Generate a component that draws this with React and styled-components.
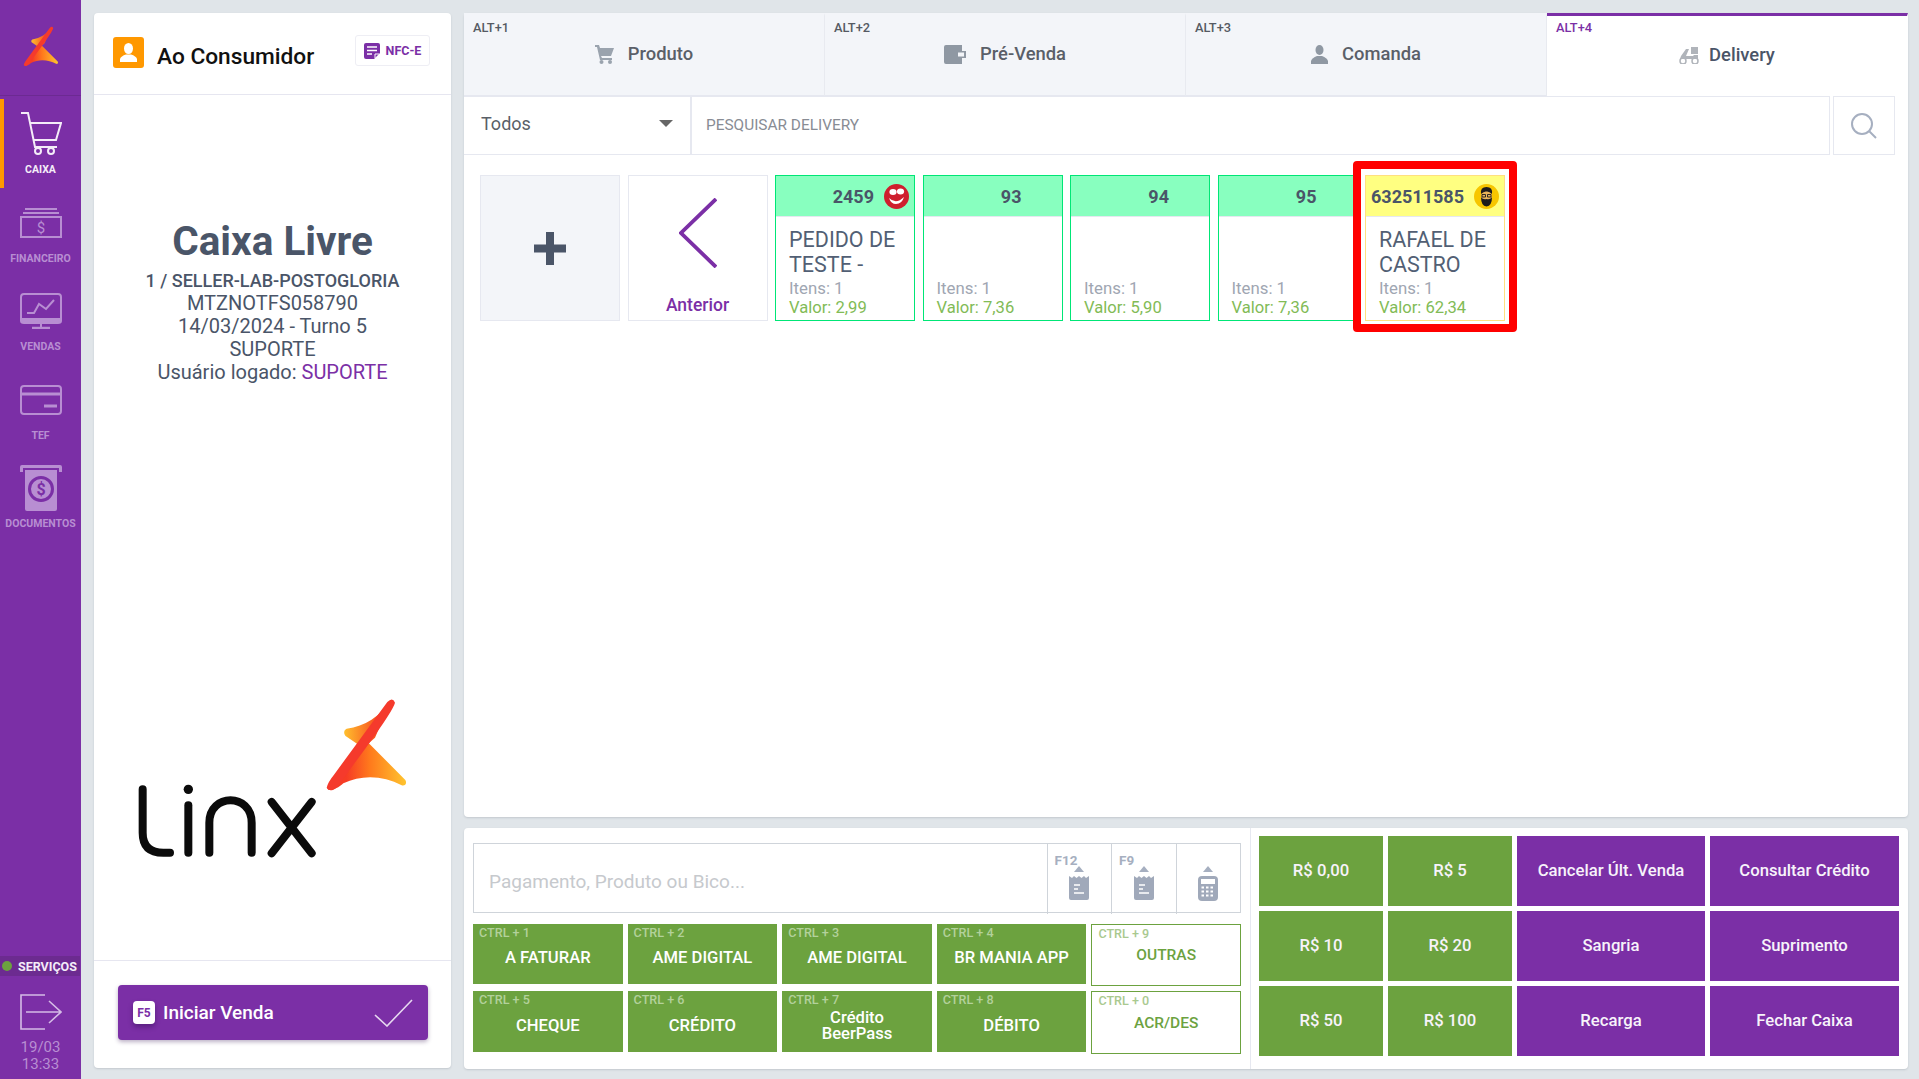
import React from "react";
import styled, { createGlobalStyle } from "styled-components";

const PURPLE = "#7b2fa6";
const GREEN = "#6ca23f";
const SLATE = "#4a5568";

const Global = createGlobalStyle`
  html, body { margin: 0; padding: 0; height: 100%; background: #e0e5e9; overflow: hidden; }
  body { font-family: Roboto, "Liberation Sans", sans-serif; }
  * { box-sizing: border-box; }
`;

const Page = styled.div`
  display: flex;
  width: 1919px;
  height: 1079px;
  background: #e0e5e9;
`;

/* ---------- sidebar ---------- */
const Sidebar = styled.nav`
  width: 81px;
  flex: none;
  display: flex;
  flex-direction: column;
  background: ${PURPLE};
`;
const BrandBox = styled.div`
  height: 96px;
  padding-bottom: 3px;
  flex: none;
  display: flex;
  align-items: center;
  justify-content: center;
  border-bottom: 1px solid #6c2a92;
  margin-bottom: 3px;
`;
const NavItem = styled.div`
  height: 88.6px;
  padding-top: 5px;
  display: flex;
  flex-direction: column;
  align-items: center;
  border-left: ${(p) => (p.$active ? "4px solid #ff9800" : "none")};
  padding-right: ${(p) => (p.$active ? "4px" : "0")};
  color: ${(p) => (p.$active ? "#f4ecf8" : "#b88ed2")};
`;
const NavIcon = styled.div`
  height: 60px;
  display: flex;
  align-items: center;
  justify-content: center;
`;
const NavLabel = styled.span`
  font-size: 10.5px;
  line-height: 12px;
  font-weight: 700;
  white-space: nowrap;
`;
const SideBottom = styled.div`
  margin-top: auto;
  display: flex;
  flex-direction: column;
  align-items: center;
`;
const ServiceBar = styled.div`
  width: 80px;
  margin-right: 1px;
  height: 20px;
  background: #6c2b90;
  display: flex;
  align-items: center;
  padding-left: 2px;
  gap: 6px;
  color: #f4ecf8;
  font-size: 12.5px;
  font-weight: 700;
`;
const Dot = styled.i`
  width: 10px;
  height: 10px;
  border-radius: 50%;
  background: #6ca23f;
  flex: none;
`;
const ExitBox = styled.div`
  margin-top: 18px;
  height: 36px;
  color: #d5bce6;
`;
const Clock = styled.div`
  margin-top: 9px;
  padding-bottom: 6px;
  text-align: center;
  font-size: 15px;
  line-height: 17px;
  color: #b88ed2;
`;

/* ---------- workspace ---------- */
const Workspace = styled.div`
  flex: 1;
  min-width: 0;
  display: flex;
  gap: 13px;
  padding: 13px 11px 10px 13px;
`;
const Panel = styled.section`
  background: #fff;
  border-radius: 4px;
  box-shadow: 0 1px 2px rgba(60, 70, 90, 0.18);
`;
const LeftPanel = styled(Panel)`
  width: 357px;
  flex: none;
  margin-bottom: 1px;
  display: flex;
  flex-direction: column;
`;
const CustomerHeader = styled.header`
  height: 82px;
  flex: none;
  position: relative;
  display: flex;
  align-items: center;
  padding: 0 0 2px 19px;
  gap: 13px;
  border-bottom: 1px solid #e6e6f0;
`;
const Avatar = styled.div`
  width: 31px;
  height: 31px;
  border-radius: 3px;
  background: #ff9800;
  display: flex;
  align-items: center;
  justify-content: center;
`;
const CustomerName = styled.h2`
  margin: 8px 0 0;
  font-size: 22.7px;
  font-weight: 500;
  color: #111;
`;
const NfceTag = styled.div`
  position: absolute;
  left: 261px;
  top: 22px;
  width: 75px;
  height: 31px;
  border: 1px solid #eeeef4;
  border-radius: 3px;
  display: flex;
  align-items: center;
  justify-content: center;
  gap: 6px;
  font-size: 12.5px;
  font-weight: 700;
  color: ${PURPLE};
`;
const CashInfo = styled.div`
  padding-top: 123px;
  text-align: center;
  color: ${SLATE};
  font-size: 20px;
  line-height: 23px;
`;
const CashTitle = styled.h1`
  margin: 0 0 5px;
  font-size: 40.5px;
  line-height: 46px;
  font-weight: 700;
`;
const CashStrong = styled.div`
  font-size: 18px;
  font-weight: 500;
`;
const UserName = styled.span`
  color: ${PURPLE};
`;
const LogoBox = styled.div`
  margin-top: auto;
  padding: 0 0 99px 41px;
  display: flex;
`;
const StartFooter = styled.footer`
  height: 108px;
  flex: none;
  padding: 24px 23px 0 24px;
  border-top: 1px solid #e6e6f0;
`;
const StartButton = styled.button`
  width: 310px;
  height: 55px;
  border: 0;
  border-radius: 4px;
  background: ${PURPLE};
  box-shadow: 0 2px 4px rgba(60, 30, 90, 0.35);
  display: flex;
  align-items: center;
  padding: 0 15px;
  gap: 8px;
  color: #fff;
  font: 500 19px Roboto, sans-serif;
`;
const KeyBadge = styled.span`
  width: 22px;
  height: 23px;
  border-radius: 4px;
  background: #fff;
  color: ${PURPLE};
  font-size: 12px;
  font-weight: 700;
  display: flex;
  align-items: center;
  justify-content: center;
  box-shadow: 0 3px 5px rgba(40, 10, 70, 0.4);
`;
const CheckBox = styled.span`
  margin-left: auto;
  display: flex;
`;

const RightColumn = styled.div`
  flex: 1;
  min-width: 0;
  display: flex;
  flex-direction: column;
  gap: 11px;
`;
const MainPanel = styled(Panel)`
  flex: 1;
  min-height: 0;
  display: flex;
  flex-direction: column;
  position: relative;
`;
const Tabs = styled.div`
  height: 84px;
  flex: none;
  display: grid;
  grid-template-columns: repeat(4, 1fr);
`;
const Tab = styled.div`
  background: ${(p) => (p.$active ? "#fff" : "#f3f5f9")};
  border-top: 3px solid ${(p) => (p.$active ? PURPLE : "#f3f5f9")};
  border-right: 1px solid ${(p) => (p.$active ? "transparent" : "#e8eaf0")};
  border-bottom: 2px solid ${(p) => (p.$active ? "#fff" : "#e6e8f0")};
  display: flex;
  flex-direction: column;
  padding: 5px 0 0 9px;
  color: ${(p) => (p.$active ? SLATE : "#5a5f68")};
`;
const TabKey = styled.span`
  font-size: 12.8px;
  line-height: 14px;
  font-weight: 500;
  color: ${(p) => (p.$active ? PURPLE : "#555a63")};
`;
const TabTitle = styled.div`
  margin-top: ${(p) => (p.$active ? "7px" : "6px")};
  margin-left: -9px;
  display: flex;
  align-items: center;
  justify-content: center;
  gap: ${(p) => (p.$active ? "10px" : "14px")};
  font-size: 18.4px;
  line-height: 26px;
  font-weight: 500;
`;
const Toolbar = styled.div`
  height: 59px;
  flex: none;
  display: flex;
  padding-right: 13px;
  margin-top: -1px;
`;
const SelectBox = styled.div`
  width: 228px;
  flex: none;
  display: flex;
  align-items: center;
  justify-content: space-between;
  padding: 0 17px 4px 17px;
  border-right: 2px solid #e6e8f0;
  border-bottom: 1px solid #e6e8f0;
  font-size: 18px;
  color: #5a5f68;
`;
const Caret = styled.i`
  width: 0;
  height: 0;
  border-left: 7px solid transparent;
  border-right: 7px solid transparent;
  border-top: 7px solid #666;
`;
const SearchField = styled.div`
  flex: 1;
  display: flex;
  align-items: center;
  padding: 0 0 2px 14px;
  font-size: 15.4px;
  color: #888c94;
  border-top: 1px solid #e6e8f0;
  border-right: 1px solid #e6e8f0;
  border-bottom: 1px solid #e6e8f0;
`;
const SearchButton = styled.div`
  width: 62px;
  margin-left: 3px;
  flex: none;
  display: flex;
  align-items: center;
  justify-content: center;
  border: 1px solid #e6e8f0;
`;
const CardRow = styled.div`
  display: flex;
  gap: 7.5px;
  padding: 20px 0 0 16px;
`;
const TileBase = styled.div`
  width: 140px;
  height: 146px;
  flex: none;
  border: 1px solid #e6e8f0;
  display: flex;
  flex-direction: column;
  align-items: center;
`;
const AddTile = styled(TileBase)`
  background: #f3f5f9;
  justify-content: center;
`;
const BackTile = styled(TileBase)`
  padding-top: 22px;
`;
const BackLabel = styled.span`
  margin-top: 27px;
  font-size: 17.5px;
  font-weight: 500;
  color: ${PURPLE};
`;
const OrderCard = styled.article`
  width: 140px;
  height: 146px;
  flex: none;
  border: 1px solid ${(p) => (p.$tone === "yellow" ? "#ffdf80" : "#00e676")};
  display: flex;
  flex-direction: column;
  background: #fff;
`;
const OrderHeader = styled.div`
  height: 41px;
  flex: none;
  position: relative;
  display: flex;
  align-items: center;
  justify-content: flex-end;
  padding-right: 40px;
  background: ${(p) => (p.$tone === "yellow" ? "#ffff81" : "#88ffbf")};
  border-bottom: 1px solid #e6e8f0;
  font-size: 18px;
  font-weight: 700;
  color: ${SLATE};
`;
const OrderBadge = styled.span`
  position: absolute;
  right: 5px;
  top: 8px;
  width: 25px;
  height: 25px;
  display: flex;
`;
const OrderBody = styled.div`
  padding: 11px 2px 0 13px;
`;
const OrderName = styled.div`
  height: 51px;
  font-size: 21.5px;
  line-height: 24.5px;
  color: #525f74;
`;
const OrderItems = styled.div`
  font-size: 16.8px;
  line-height: 19px;
  color: #a0a6b2;
`;
const OrderValue = styled.div`
  font-size: 16.6px;
  line-height: 20px;
  color: #82bb56;
`;
const Highlight = styled.div`
  position: absolute;
  left: 889px;
  top: 148px;
  width: 164px;
  height: 171px;
  border: 8px solid #ff0000;
  border-radius: 4px;
  pointer-events: none;
`;

/* ---------- bottom ---------- */
const BottomPanel = styled(Panel)`
  height: 241px;
  flex: none;
  display: flex;
`;
const PaySection = styled.div`
  width: 787px;
  flex: none;
  padding: 15px 9px 0 9px;
  border-right: 1px solid #e6e8f0;
`;
const PayInput = styled.div`
  height: 70px;
  display: flex;
  border: 1px solid #cfd4da;
`;
const PayPlaceholder = styled.div`
  flex: 1;
  display: flex;
  align-items: center;
  padding: 6px 0 0 15px;
  font-size: 19px;
  color: #c6c9cd;
`;
const PayTool = styled.div`
  width: 64.5px;
  flex: none;
  position: relative;
  border-left: 1px solid #cfd4da;
  margin-bottom: -2px;
  display: flex;
  flex-direction: column;
  align-items: center;
  padding-top: 22px;
`;
const PayToolKey = styled.span`
  position: absolute;
  left: 7px;
  top: 8px;
  font-size: 13.5px;
  font-weight: 700;
  color: #a6afc0;
`;
const Triangle = styled.i`
  width: 0;
  height: 0;
  margin-bottom: 4px;
  align-self: center;
  border-left: 5px solid transparent;
  border-right: 5px solid transparent;
  border-bottom: 6px solid #a6afc0;
`;
const PayGrid = styled.div`
  margin-top: 11px;
  display: grid;
  grid-template-columns: repeat(5, 1fr);
  grid-template-rows: 60px 61px;
  column-gap: 5px;
  row-gap: 7px;
`;
const PayButton = styled.div`
  position: relative;
  display: flex;
  align-items: center;
  justify-content: center;
  text-align: center;
  padding-top: ${(p) => (p.$outline ? "0" : "8px")};
  background: ${(p) => (p.$outline ? "#fff" : GREEN)};
  border: ${(p) => (p.$outline ? `1.5px solid ${GREEN}` : "0")};
  margin-bottom: ${(p) => (p.$outline ? "-2px" : "0")};
  color: ${(p) => (p.$outline ? GREEN : "#fff")};
  font-size: ${(p) => (p.$outline ? "15.5px" : "16.6px")};
  line-height: 16px;
  font-weight: 500;
`;
const PayKey = styled.span`
  position: absolute;
  left: 6px;
  top: 2px;
  font-size: 12.6px;
  line-height: 14px;
  font-weight: 500;
  color: ${(p) => (p.$outline ? "#a9c98f" : "#b3d19b")};
`;
const QuickGrid = styled.div`
  flex: 1;
  padding: 8px 0 0 8px;
  display: grid;
  grid-template-columns: 124px 124px 188px 189px;
  grid-auto-rows: 70px;
  gap: 5px;
`;
const QuickButton = styled.div`
  display: flex;
  align-items: center;
  justify-content: center;
  padding-bottom: 2px;
  background: ${(p) => (p.$tone === "green" ? GREEN : PURPLE)};
  color: #f7f3fa;
  font-size: 16.7px;
  font-weight: 500;
`;

/* ---------- drawings ---------- */
const MarkDefs = () => (
  <defs>
    <linearGradient id="markA" x1="1030" y1="220" x2="1130" y2="220" gradientUnits="userSpaceOnUse">
      <stop offset="0" stopColor="#ffc22e" />
      <stop offset="1" stopColor="#f8501f" />
    </linearGradient>
    <linearGradient id="markB" x1="1040" y1="340" x2="1215" y2="340" gradientUnits="userSpaceOnUse">
      <stop offset="0" stopColor="#f63c25" />
      <stop offset="0.4" stopColor="#ff7a1c" />
      <stop offset="1" stopColor="#ffc22e" />
    </linearGradient>
  </defs>
);
const MarkShapes = () => (
  <>
    <path fill="url(#markA)" d="M1172 126C1140 170 1095 202 1040 208C1030 212 1030 226 1040 232L1090 266L1125 235Z" />
    <path fill="url(#markB)" d="M1105 250L1216 362C1222 372 1215 381 1205 378C1150 348 1085 345 1030 372C1010 390 985 400 981 385Z" />
    <path fill="#f53a2c" d="M1162 128Q1178 112 1185 130Q1180 152 1100 262L1012 382Q990 402 980 385Q984 368 1002 346Z" />
  </>
);
const BrandMark = () => (
  <svg width="36" height="41" viewBox="975 115 250 285">
    <MarkDefs />
    <MarkShapes />
  </svg>
);
const LinxLogo = () => (
  <svg width="275" height="165" viewBox="405 110 825 495">
    <MarkDefs />
    <g fill="none" stroke="#0b0b0b" strokeWidth="24" strokeLinecap="round" strokeLinejoin="round">
      <path d="M428 390V520Q428 580 490 580H510" />
      <path d="M565 438V580" />
      <path d="M628 580V490C628 400 755 400 755 490V580" />
      <path d="M815 428L935 582M935 428L815 582" />
    </g>
    <circle cx="565" cy="390" r="14" fill="#0b0b0b" />
    <MarkShapes />
  </svg>
);
const CartNav = () => (
  <svg width="42" height="44" viewBox="0 0 42 44" fill="none" stroke="currentColor" strokeWidth="2">
    <path d="M1 1H8L15 35H37" />
    <path d="M10 11H41L36 28H14" />
    <circle cx="18" cy="39" r="3" />
    <circle cx="31" cy="39" r="3" />
  </svg>
);
const MoneyNav = () => (
  <svg width="42" height="30" viewBox="0 0 42 30" fill="none" stroke="currentColor" strokeWidth="2">
    <path d="M5 1H37M3 5H39" />
    <rect x="1" y="9" width="40" height="20" />
    <text x="21" y="25" fill="currentColor" stroke="none" fontSize="15" textAnchor="middle" fontFamily="Roboto">$</text>
  </svg>
);
const MonitorNav = () => (
  <svg width="42" height="36" viewBox="0 0 42 36" fill="none" stroke="currentColor" strokeWidth="2">
    <path d="M4 1H38Q41 1 41 4V26H1V4Q1 1 4 1Z" />
    <path d="M1 26H41V28Q41 30 38 30H4Q1 30 1 28Z" fill="currentColor" />
    <path d="M7 20H14L19 11L26 16L34 7" />
    <path d="M12 35H30" strokeWidth="2.5" />
    <path d="M21 30V34" />
  </svg>
);
const CardNav = () => (
  <svg width="42" height="30" viewBox="0 0 42 30" fill="none" stroke="currentColor" strokeWidth="2">
    <rect x="1" y="1" width="40" height="28" rx="3" />
    <path d="M1 9H41" strokeWidth="3" />
    <path d="M24 21H37" strokeWidth="3" />
  </svg>
);
const DocNav = () => (
  <svg width="44" height="48" viewBox="0 0 44 48">
    <path d="M3 1H41Q43 1 43 3V8H40V4H4V8H1V3Q1 1 3 1Z" fill="currentColor" />
    <path d="M6 6H38V45Q38 47 36 47H8Q6 47 6 45Z" fill="currentColor" />
    <circle cx="22" cy="25" r="11.5" fill="none" stroke={PURPLE} strokeWidth="3" />
    <text x="22" y="31" fill={PURPLE} fontSize="16" fontWeight="700" textAnchor="middle" fontFamily="Roboto">$</text>
  </svg>
);
const ExitIcon = () => (
  <svg width="42" height="36" viewBox="0 0 42 36" fill="none" stroke="currentColor" strokeWidth="1.6">
    <path d="M25 1H1V35H25" />
    <path d="M6 18H40M29 7L41 18L29 29" />
  </svg>
);
const PersonWhite = () => (
  <svg width="17" height="19" viewBox="0 0 17 19" fill="#fff">
    <ellipse cx="8.5" cy="5.5" rx="4.5" ry="5.5" />
    <path d="M0 19V16Q1 13 6 11.5H11Q16 13 17 16V19Z" />
  </svg>
);
const NoteIcon = () => (
  <svg width="16" height="16" viewBox="0 0 16 16">
    <path d="M2 0H14Q16 0 16 2V10L10 16H2Q0 16 0 14V2Q0 0 2 0Z" fill="currentColor" />
    <path d="M3 4H13M3 7.5H13M3 11H8" stroke="#fff" strokeWidth="1.6" />
    <path d="M11 15V11H15" stroke="#fff" strokeWidth="1" fill="none" />
  </svg>
);
const CheckIcon = () => (
  <svg width="39" height="28" viewBox="0 0 39 28" fill="none" stroke="#e6d8f0" strokeWidth="1.6">
    <path d="M1 16L13 27L38 1" />
  </svg>
);
const CartTab = () => (
  <svg width="19" height="19" viewBox="0 0 19 19" fill="#9aa3ae">
    <path d="M0 0H4L5 3H19L16 11H6L7 13H17V15H5L2 2H0Z" />
    <circle cx="6.5" cy="17" r="2" />
    <circle cx="15" cy="17" r="2" />
  </svg>
);
const WalletTab = () => (
  <svg width="22" height="19" viewBox="0 0 22 19">
    <path d="M2 0H18V6H22V13H18V19H2Q0 19 0 17V2Q0 0 2 0Z" fill="#8f98a3" />
    <rect x="14" y="7.5" width="6" height="4" fill="#f3f5f9" />
  </svg>
);
const PersonTab = () => (
  <svg width="17" height="19" viewBox="0 0 17 19" fill="#8f98a3">
    <ellipse cx="8.5" cy="5" rx="4" ry="5" />
    <path d="M0 19V16Q1 13 6 11H11Q16 13 17 16V19Z" />
  </svg>
);
const ScooterTab = () => (
  <svg width="20" height="18" viewBox="0 0 20 18" fill="#b0b4ba">
    <rect x="12" y="1" width="7" height="7" />
    <path d="M2 10L7 3H10L7 10H14L15 9H19V13H1Z" />
    <circle cx="4" cy="15" r="3" fill="none" stroke="#b0b4ba" strokeWidth="1.5" />
    <circle cx="16" cy="15" r="3" fill="none" stroke="#b0b4ba" strokeWidth="1.5" />
  </svg>
);
const SearchIcon = () => (
  <svg width="26" height="26" viewBox="0 0 26 26" fill="none" stroke="#a6afc0" strokeWidth="2">
    <circle cx="11" cy="11" r="10" />
    <path d="M18 18L25 25" />
  </svg>
);
const PlusIcon = () => (
  <svg width="32" height="33" viewBox="0 0 32 33" fill={SLATE}>
    <path d="M12 0H20V12.5H32V20.5H20V33H12V20.5H0V12.5H12Z" />
  </svg>
);
const ChevronLeft = () => (
  <svg width="38" height="70" viewBox="0 0 38 70" fill="none" stroke={PURPLE} strokeWidth="3.8">
    <path d="M37 1L2 35L37 69" />
  </svg>
);
const SmileFace = () => (
  <svg width="25" height="25" viewBox="0 0 25 25">
    <circle cx="12.5" cy="12.5" r="12.5" fill="#cf1f2e" />
    <ellipse cx="9" cy="8" rx="3.6" ry="3" fill="#fff" />
    <ellipse cx="16.5" cy="7.5" rx="3.6" ry="3" fill="#fff" />
    <path d="M5 14Q12 21 20 13Q18 20 12 20Q7 20 5 14Z" fill="#fff" />
  </svg>
);
const BeardFace = () => (
  <svg width="25" height="25" viewBox="0 0 25 25">
    <circle cx="12.5" cy="12.5" r="12.5" fill="#f7c600" />
    <ellipse cx="12.5" cy="13" rx="5.5" ry="8" fill="#e8b45a" />
    <path d="M7 10Q6 3 12.5 3Q19 3 18 10Q15 7 12.5 7.5Q10 7 7 10Z" fill="#1c1c1c" />
    <path d="M7 13Q9 16 12.5 15Q16 16 18 13Q18 22 12.5 22.5Q7 22 7 13Z" fill="#1c1c1c" />
    <path d="M8 10.5H11.5V13H8ZM13.5 10.5H17V13H13.5Z" fill="none" stroke="#1c1c1c" strokeWidth="0.9" />
  </svg>
);
const ReceiptIcon = () => (
  <svg width="20" height="24" viewBox="0 0 20 24">
    <path d="M0 0L3 2L5 0L7.5 2L10 0L12.5 2L15 0L17 2L20 0V22Q20 24 18 24H2Q0 24 0 22Z" fill="#a0a9ba" />
    <path d="M5 9H11M5 13H9M5 17H15" stroke="#fff" strokeWidth="1.6" />
  </svg>
);
const TerminalIcon = () => (
  <svg width="20" height="25" viewBox="0 0 20 25">
    <rect width="20" height="25" rx="4" fill="#a0a9ba" />
    <rect x="3" y="3" width="14" height="5" fill="#fff" />
    <path d="M3.5 11.5H16.5M3.5 15.5H16.5M3.5 19.5H16.5" stroke="#fff" strokeWidth="2" strokeDasharray="2.5 2" />
  </svg>
);

/* ---------- data ---------- */
const nav = [
  { label: "CAIXA", icon: <CartNav />, active: true },
  { label: "FINANCEIRO", icon: <MoneyNav /> },
  { label: "VENDAS", icon: <MonitorNav /> },
  { label: "TEF", icon: <CardNav /> },
  { label: "DOCUMENTOS", icon: <DocNav /> },
];
const tabs = [
  { key: "ALT+1", title: "Produto", icon: <CartTab /> },
  { key: "ALT+2", title: "Pré-Venda", icon: <WalletTab /> },
  { key: "ALT+3", title: "Comanda", icon: <PersonTab /> },
  { key: "ALT+4", title: "Delivery", icon: <ScooterTab />, active: true },
];
const orders = [
  { num: "2459", name: "PEDIDO DE TESTE -", value: "2,99", badge: <SmileFace /> },
  { num: "93", name: "", value: "7,36" },
  { num: "94", name: "", value: "5,90" },
  { num: "95", name: "", value: "7,36" },
  { num: "632511585", name: "RAFAEL DE CASTRO", value: "62,34", tone: "yellow", badge: <BeardFace /> },
];
const pay = [
  { key: "CTRL + 1", label: "A FATURAR" },
  { key: "CTRL + 2", label: "AME DIGITAL" },
  { key: "CTRL + 3", label: "AME DIGITAL" },
  { key: "CTRL + 4", label: "BR MANIA APP" },
  { key: "CTRL + 9", label: "OUTRAS", outline: true },
  { key: "CTRL + 5", label: "CHEQUE" },
  { key: "CTRL + 6", label: "CRÉDITO" },
  { key: "CTRL + 7", label: <>Crédito<br />BeerPass</> },
  { key: "CTRL + 8", label: "DÉBITO" },
  { key: "CTRL + 0", label: "ACR/DES", outline: true },
];
const quick = [
  ["R$ 0,00", "green"], ["R$ 5", "green"], ["Cancelar Últ. Venda"], ["Consultar Crédito"],
  ["R$ 10", "green"], ["R$ 20", "green"], ["Sangria"], ["Suprimento"],
  ["R$ 50", "green"], ["R$ 100", "green"], ["Recarga"], ["Fechar Caixa"],
];

export default function App() {
  return (
    <Page>
      <Global />
      <Sidebar>
        <BrandBox><BrandMark /></BrandBox>
        {nav.map((n) => (
          <NavItem key={n.label} $active={n.active}>
            <NavIcon>{n.icon}</NavIcon>
            <NavLabel>{n.label}</NavLabel>
          </NavItem>
        ))}
        <SideBottom>
          <ServiceBar><Dot />SERVIÇOS</ServiceBar>
          <ExitBox><ExitIcon /></ExitBox>
          <Clock>19/03<br />13:33</Clock>
        </SideBottom>
      </Sidebar>
      <Workspace>
        <LeftPanel>
          <CustomerHeader>
            <Avatar><PersonWhite /></Avatar>
            <CustomerName>Ao Consumidor</CustomerName>
            <NfceTag><NoteIcon />NFC-E</NfceTag>
          </CustomerHeader>
          <CashInfo>
            <CashTitle>Caixa Livre</CashTitle>
            <CashStrong>1 / SELLER-LAB-POSTOGLORIA</CashStrong>
            <div>MTZNOTFS058790</div>
            <div>14/03/2024 - Turno 5</div>
            <div>SUPORTE</div>
            <div>Usuário logado: <UserName>SUPORTE</UserName></div>
          </CashInfo>
          <LogoBox><LinxLogo /></LogoBox>
          <StartFooter>
            <StartButton>
              <KeyBadge>F5</KeyBadge>
              Iniciar Venda
              <CheckBox><CheckIcon /></CheckBox>
            </StartButton>
          </StartFooter>
        </LeftPanel>
        <RightColumn>
          <MainPanel>
            <Tabs>
              {tabs.map((t) => (
                <Tab key={t.key} $active={t.active}>
                  <TabKey $active={t.active}>{t.key}</TabKey>
                  <TabTitle $active={t.active}>{t.icon}{t.title}</TabTitle>
                </Tab>
              ))}
            </Tabs>
            <Toolbar>
              <SelectBox>Todos<Caret /></SelectBox>
              <SearchField>PESQUISAR DELIVERY</SearchField>
              <SearchButton><SearchIcon /></SearchButton>
            </Toolbar>
            <CardRow>
              <AddTile><PlusIcon /></AddTile>
              <BackTile><ChevronLeft /><BackLabel>Anterior</BackLabel></BackTile>
              {orders.map((o) => (
                <OrderCard key={o.num} $tone={o.tone}>
                  <OrderHeader $tone={o.tone}>
                    {o.num}
                    {o.badge && <OrderBadge>{o.badge}</OrderBadge>}
                  </OrderHeader>
                  <OrderBody>
                    <OrderName>{o.name}</OrderName>
                    <OrderItems>Itens: 1</OrderItems>
                    <OrderValue>Valor: {o.value}</OrderValue>
                  </OrderBody>
                </OrderCard>
              ))}
            </CardRow>
            <Highlight />
          </MainPanel>
          <BottomPanel>
            <PaySection>
              <PayInput>
                <PayPlaceholder>Pagamento, Produto ou Bico...</PayPlaceholder>
                <PayTool><PayToolKey>F12</PayToolKey><Triangle /><ReceiptIcon /></PayTool>
                <PayTool><PayToolKey>F9</PayToolKey><Triangle /><ReceiptIcon /></PayTool>
                <PayTool><Triangle /><TerminalIcon /></PayTool>
              </PayInput>
              <PayGrid>
                {pay.map((p) => (
                  <PayButton key={p.key} $outline={p.outline}>
                    <PayKey $outline={p.outline}>{p.key}</PayKey>
                    <span>{p.label}</span>
                  </PayButton>
                ))}
              </PayGrid>
            </PaySection>
            <QuickGrid>
              {quick.map(([label, tone]) => (
                <QuickButton key={label} $tone={tone}>{label}</QuickButton>
              ))}
            </QuickGrid>
          </BottomPanel>
        </RightColumn>
      </Workspace>
    </Page>
  );
}
